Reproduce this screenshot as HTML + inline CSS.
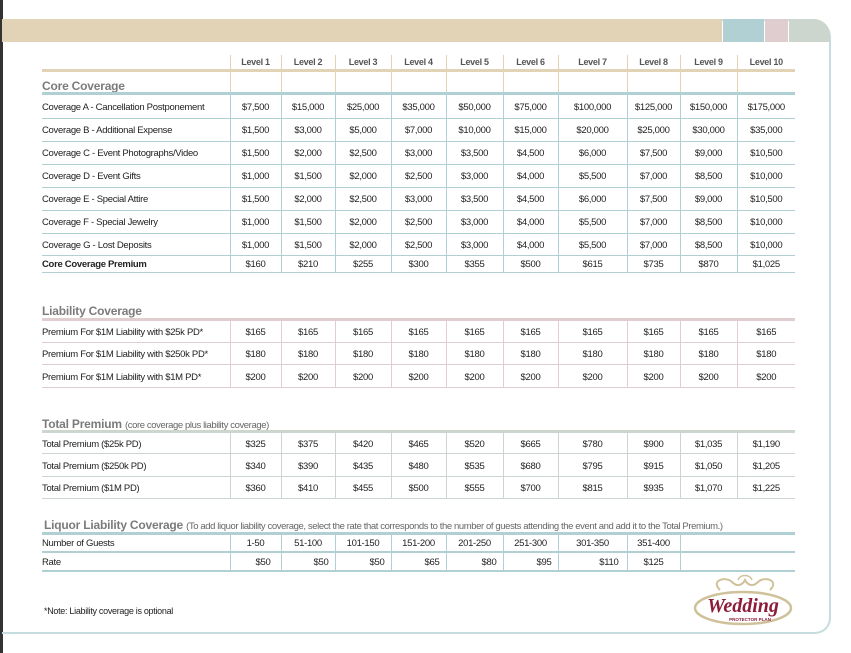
<!DOCTYPE html>
<html><head><meta charset="utf-8"><style>
*{margin:0;padding:0;box-sizing:border-box}
body{width:851px;height:653px;background:#fff;position:relative;overflow:hidden;font-family:"Liberation Sans",Arial,sans-serif;color:#222}
.lb{position:absolute;left:0;top:0;width:3px;height:653px;background:#333}
.frame{position:absolute;left:2px;top:19px;width:829px;height:615px;border:2px solid #c7dcdf;border-left:none;border-radius:0 18px 16px 0}
.band{position:absolute;top:19px;height:23px}
table{position:absolute;left:42px;border-collapse:collapse;table-layout:fixed;font-size:9.5px;letter-spacing:-0.3px}
td{padding:0;white-space:nowrap;overflow:visible}
td.n{text-align:center}
.t{position:absolute;left:42px;font-size:12px;font-weight:bold;color:#7b7b7b;letter-spacing:-0.2px}
.t small{font-size:9.5px;font-weight:normal;color:#666;letter-spacing:-0.4px}
col.l{width:188px}
.core td{border-bottom:1px solid #b0d0d4;padding-top:2px}
.core td+td{border-left:1px solid #b0d0d4}
.liab td{border-bottom:1px solid #e0cdd0;padding-top:3px}
.liab td+td{border-left:1px solid #e0cdd0}
.tot td{border-bottom:1px solid #cdd5cf;padding-top:3px}
.tot td+td{border-left:1px solid #cdd5cf}
.liq td{border-bottom:2px solid #b0d0d4;padding-top:1px}
.liq td+td{border-left:1px solid #b0d0d4}
</style></head><body>
<div class="lb"></div>
<div class="frame"></div>
<div class="band" style="left:2px;width:720px;background:#e3d3b6"></div>
<div class="band" style="left:723px;width:41px;background:#b0d0d4"></div>
<div class="band" style="left:765px;width:23px;background:#e0cdd0"></div>
<div class="band" style="left:789px;width:41px;background:#cdd5cf;border-top-right-radius:16px"></div>

<table style="top:55px;width:753px">
<colgroup><col class="l"><col style="width:51px"><col style="width:54px"><col style="width:56px"><col style="width:55px"><col style="width:57px"><col style="width:55px"><col style="width:69px"><col style="width:53px"><col style="width:57px"><col style="width:58px"></colgroup>
<tr style="height:14px;font-weight:bold;color:#555;font-size:9px"><td></td><td class="n" style="border-left:1px solid #e3d3b6">Level 1</td><td class="n" style="border-left:1px solid #e3d3b6">Level 2</td><td class="n" style="border-left:1px solid #e3d3b6">Level 3</td><td class="n" style="border-left:1px solid #e3d3b6">Level 4</td><td class="n" style="border-left:1px solid #e3d3b6">Level 5</td><td class="n" style="border-left:1px solid #e3d3b6">Level 6</td><td class="n" style="border-left:1px solid #e3d3b6">Level 7</td><td class="n" style="border-left:1px solid #e3d3b6">Level 8</td><td class="n" style="border-left:1px solid #e3d3b6">Level 9</td><td class="n" style="border-left:1px solid #e3d3b6">Level 10</td></tr>
<tr style="height:3px;background:#e3d3b6"><td colspan="11"></td></tr>
</table>
<div class="t" style="top:79px">Core Coverage</div>
<div style="position:absolute;left:42px;top:92px;width:753px;height:3px;background:#b0d0d4"></div>
<div style="position:absolute;top:72px;left:230px;width:565px;height:20px;background:linear-gradient(90deg,#e3d3b6 1px,transparent 1px) 0 0/51px 20px no-repeat,linear-gradient(90deg,#e3d3b6 1px,transparent 1px) 51px 0/54px 20px no-repeat,linear-gradient(90deg,#e3d3b6 1px,transparent 1px) 105px 0/56px 20px no-repeat,linear-gradient(90deg,#e3d3b6 1px,transparent 1px) 161px 0/55px 20px no-repeat,linear-gradient(90deg,#e3d3b6 1px,transparent 1px) 216px 0/57px 20px no-repeat,linear-gradient(90deg,#e3d3b6 1px,transparent 1px) 273px 0/55px 20px no-repeat,linear-gradient(90deg,#e3d3b6 1px,transparent 1px) 328px 0/69px 20px no-repeat,linear-gradient(90deg,#e3d3b6 1px,transparent 1px) 397px 0/53px 20px no-repeat,linear-gradient(90deg,#e3d3b6 1px,transparent 1px) 450px 0/57px 20px no-repeat,linear-gradient(90deg,#e3d3b6 1px,transparent 1px) 507px 0/58px 20px no-repeat"></div>

<table class="core" style="top:95px;width:753px">
<colgroup><col class="l"><col style="width:51px"><col style="width:54px"><col style="width:56px"><col style="width:55px"><col style="width:57px"><col style="width:55px"><col style="width:69px"><col style="width:53px"><col style="width:57px"><col style="width:58px"></colgroup>
<tr style="height:23px"><td>Coverage A - Cancellation Postponement</td><td class="n">$7,500</td><td class="n">$15,000</td><td class="n">$25,000</td><td class="n">$35,000</td><td class="n">$50,000</td><td class="n">$75,000</td><td class="n">$100,000</td><td class="n">$125,000</td><td class="n">$150,000</td><td class="n">$175,000</td></tr>
<tr style="height:23px"><td>Coverage B - Additional Expense</td><td class="n">$1,500</td><td class="n">$3,000</td><td class="n">$5,000</td><td class="n">$7,000</td><td class="n">$10,000</td><td class="n">$15,000</td><td class="n">$20,000</td><td class="n">$25,000</td><td class="n">$30,000</td><td class="n">$35,000</td></tr>
<tr style="height:23px"><td>Coverage C - Event Photographs/Video</td><td class="n">$1,500</td><td class="n">$2,000</td><td class="n">$2,500</td><td class="n">$3,000</td><td class="n">$3,500</td><td class="n">$4,500</td><td class="n">$6,000</td><td class="n">$7,500</td><td class="n">$9,000</td><td class="n">$10,500</td></tr>
<tr style="height:23px"><td>Coverage D - Event Gifts</td><td class="n">$1,000</td><td class="n">$1,500</td><td class="n">$2,000</td><td class="n">$2,500</td><td class="n">$3,000</td><td class="n">$4,000</td><td class="n">$5,500</td><td class="n">$7,000</td><td class="n">$8,500</td><td class="n">$10,000</td></tr>
<tr style="height:23px"><td>Coverage E - Special Attire</td><td class="n">$1,500</td><td class="n">$2,000</td><td class="n">$2,500</td><td class="n">$3,000</td><td class="n">$3,500</td><td class="n">$4,500</td><td class="n">$6,000</td><td class="n">$7,500</td><td class="n">$9,000</td><td class="n">$10,500</td></tr>
<tr style="height:23px"><td>Coverage F - Special Jewelry</td><td class="n">$1,000</td><td class="n">$1,500</td><td class="n">$2,000</td><td class="n">$2,500</td><td class="n">$3,000</td><td class="n">$4,000</td><td class="n">$5,500</td><td class="n">$7,000</td><td class="n">$8,500</td><td class="n">$10,000</td></tr>
<tr style="height:22px"><td>Coverage G - Lost Deposits</td><td class="n">$1,000</td><td class="n">$1,500</td><td class="n">$2,000</td><td class="n">$2,500</td><td class="n">$3,000</td><td class="n">$4,000</td><td class="n">$5,500</td><td class="n">$7,000</td><td class="n">$8,500</td><td class="n">$10,000</td></tr>
<tr style="height:17px"><td style="font-weight:bold">Core Coverage Premium</td><td class="n">$160</td><td class="n">$210</td><td class="n">$255</td><td class="n">$300</td><td class="n">$355</td><td class="n">$500</td><td class="n">$615</td><td class="n">$735</td><td class="n">$870</td><td class="n">$1,025</td></tr>
</table>

<div class="t" style="top:304px">Liability Coverage</div>
<div style="position:absolute;left:42px;top:318px;width:753px;height:3px;background:#e0cdd0"></div>
<table class="liab" style="top:321px;width:753px">
<colgroup><col class="l"><col style="width:51px"><col style="width:54px"><col style="width:56px"><col style="width:55px"><col style="width:57px"><col style="width:55px"><col style="width:69px"><col style="width:53px"><col style="width:57px"><col style="width:58px"></colgroup>
<tr style="height:21px"><td>Premium For $1M Liability with $25k PD*</td><td class="n">$165</td><td class="n">$165</td><td class="n">$165</td><td class="n">$165</td><td class="n">$165</td><td class="n">$165</td><td class="n">$165</td><td class="n">$165</td><td class="n">$165</td><td class="n">$165</td></tr>
<tr style="height:22px"><td>Premium For $1M Liability with $250k PD*</td><td class="n">$180</td><td class="n">$180</td><td class="n">$180</td><td class="n">$180</td><td class="n">$180</td><td class="n">$180</td><td class="n">$180</td><td class="n">$180</td><td class="n">$180</td><td class="n">$180</td></tr>
<tr style="height:23px"><td>Premium For $1M Liability with $1M PD*</td><td class="n">$200</td><td class="n">$200</td><td class="n">$200</td><td class="n">$200</td><td class="n">$200</td><td class="n">$200</td><td class="n">$200</td><td class="n">$200</td><td class="n">$200</td><td class="n">$200</td></tr>
</table>

<div class="t" style="top:417px">Total Premium <small>(core coverage plus liability coverage)</small></div>
<div style="position:absolute;left:42px;top:430px;width:753px;height:3px;background:#cdd5cf"></div>
<table class="tot" style="top:433px;width:753px">
<colgroup><col class="l"><col style="width:51px"><col style="width:54px"><col style="width:56px"><col style="width:55px"><col style="width:57px"><col style="width:55px"><col style="width:69px"><col style="width:53px"><col style="width:57px"><col style="width:58px"></colgroup>
<tr style="height:20px"><td>Total Premium ($25k PD)</td><td class="n">$325</td><td class="n">$375</td><td class="n">$420</td><td class="n">$465</td><td class="n">$520</td><td class="n">$665</td><td class="n">$780</td><td class="n">$900</td><td class="n">$1,035</td><td class="n">$1,190</td></tr>
<tr style="height:23px"><td>Total Premium ($250k PD)</td><td class="n">$340</td><td class="n">$390</td><td class="n">$435</td><td class="n">$480</td><td class="n">$535</td><td class="n">$680</td><td class="n">$795</td><td class="n">$915</td><td class="n">$1,050</td><td class="n">$1,205</td></tr>
<tr style="height:22px"><td>Total Premium ($1M PD)</td><td class="n">$360</td><td class="n">$410</td><td class="n">$455</td><td class="n">$500</td><td class="n">$555</td><td class="n">$700</td><td class="n">$815</td><td class="n">$935</td><td class="n">$1,070</td><td class="n">$1,225</td></tr>
</table>

<div class="t" style="top:518px;left:44px">Liquor Liability Coverage <small>(To add liquor liability coverage, select the rate that corresponds to the number of guests attending the event and add it to the Total Premium.)</small></div>
<div style="position:absolute;left:42px;top:532px;width:753px;height:3px;background:#b0d0d4"></div>
<table class="liq" style="top:535px;width:753px">
<colgroup><col class="l"><col style="width:51px"><col style="width:54px"><col style="width:56px"><col style="width:55px"><col style="width:57px"><col style="width:55px"><col style="width:69px"><col style="width:53px"><col style="width:115px"></colgroup>
<tr style="height:17px"><td>Number of Guests</td><td class="n">1-50</td><td class="n">51-100</td><td class="n">101-150</td><td class="n">151-200</td><td class="n">201-250</td><td class="n">251-300</td><td class="n">301-350</td><td class="n">351-400</td><td></td></tr>
<tr style="height:19px"><td>Rate</td><td style="text-align:right;padding-right:10px">$50</td><td style="text-align:right;padding-right:6px">$50</td><td style="text-align:right;padding-right:6px">$50</td><td style="text-align:right;padding-right:6px">$65</td><td style="text-align:right;padding-right:6px">$80</td><td style="text-align:right;padding-right:6px">$95</td><td style="text-align:right;padding-right:8px">$110</td><td class="n">$125</td><td></td></tr>
</table>

<div style="position:absolute;left:44px;top:606px;font-size:9px;letter-spacing:-0.3px">*Note: Liability coverage is optional</div>

<svg style="position:absolute;left:690px;top:572px" width="110" height="60" viewBox="0 0 110 60">
<path d="M30 18 C20 8 36 4 42 10 C48 16 53 12 55 8 C57 12 62 16 68 10 C74 4 90 8 80 18" fill="none" stroke="#cfc29a" stroke-width="2"/>
<path d="M48 8 C50 2 60 2 62 8" fill="none" stroke="#cfc29a" stroke-width="1.5"/>
<ellipse cx="53" cy="36" rx="48" ry="16" fill="#fff" stroke="#cfc29a" stroke-width="2.5"/>
<text x="53" y="40" text-anchor="middle" font-family="Liberation Serif,serif" font-style="italic" font-weight="bold" font-size="20" fill="#8c1c3a">Wedding</text>
<text x="60" y="49" text-anchor="middle" font-family="Liberation Sans,sans-serif" font-weight="bold" font-size="4.5" fill="#8c1c3a">PROTECTOR PLAN</text>
</svg>
</body></html>
